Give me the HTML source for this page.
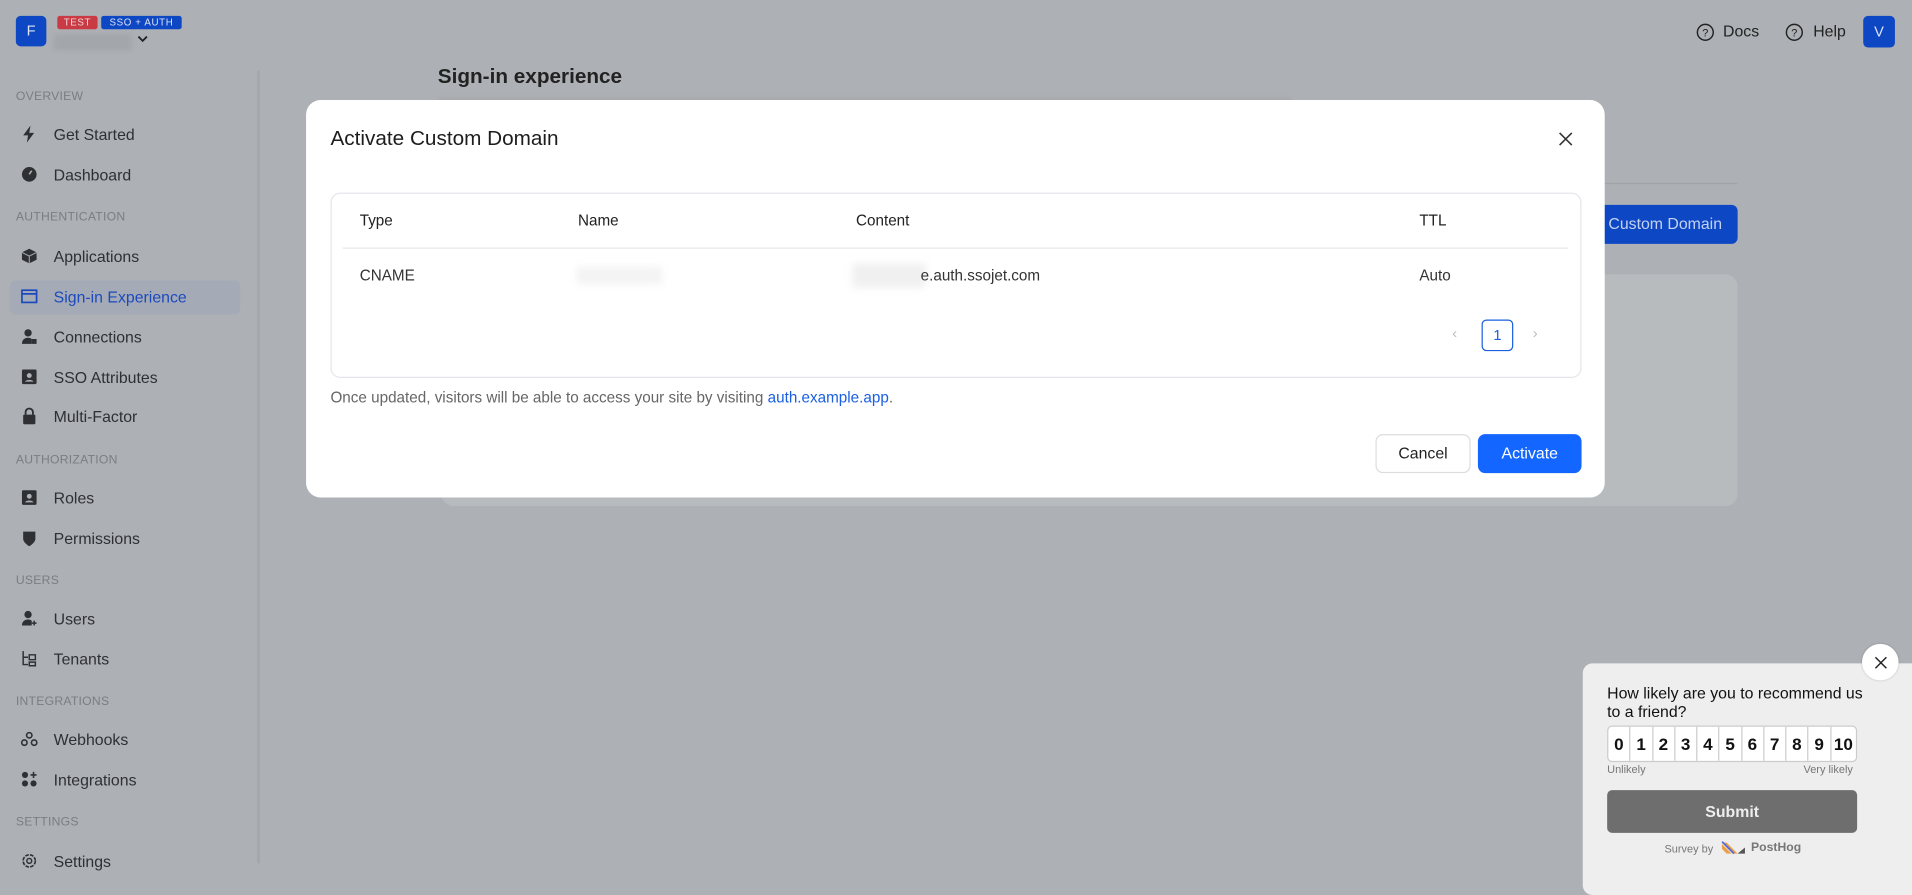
<!DOCTYPE html>
<html><head><meta charset="utf-8"><style>
html,body{margin:0;padding:0;width:1912px;height:876px;overflow:hidden;background:#adb0b4}
#w{position:absolute;left:0;top:0;width:1568px;height:718px;transform:scale(1.21939);transform-origin:0 0;font-family:"Liberation Sans",sans-serif;color:#2a2c30}
.a{position:absolute;white-space:nowrap}
.sec{font-size:10px;color:#7a7e84;letter-spacing:.2px}
.it{font-size:13px;color:#2e3033}
.ic{position:absolute;width:14px;height:14px;left:17px}
.modal{position:absolute;left:251px;top:82px;width:1065px;height:326px;background:#fff;border-radius:12px}
.th{font-size:12.5px;color:#222}
.nb{display:inline-block;width:17.7px;height:28px;border-left:1px solid #ccc;text-align:center;line-height:28px;font-weight:bold;font-size:14px;color:#111}
</style></head><body><div id="w">
<div class="a" style="left:13px;top:13px;width:25px;height:25px;background:#0e47c4;border-radius:4px;color:#dbe3f5;font-size:12px;text-align:center;line-height:25px">F</div>
<div class="a" style="left:47px;top:13px;width:33px;height:11px;background:#c93a45;border-radius:2px;color:#f3d6d9;font-size:8px;text-align:center;line-height:11px;letter-spacing:.5px">TEST</div>
<div class="a" style="left:83px;top:13px;width:66px;height:11px;background:#0e47c4;border-radius:2px;color:#dbe3f5;font-size:8px;text-align:center;line-height:11px;letter-spacing:.5px">SSO + AUTH</div>
<div class="a" style="left:44px;top:28px;width:64px;height:13px;background:#a3a6aa;filter:blur(2px)"></div>
<svg class="a" style="left:112px;top:28px" width="10" height="8" viewBox="0 0 10 8"><path d="M1.5 2l3.5 3.5 3.5-3.5" stroke="#222" stroke-width="1.5" fill="none"/></svg>
<svg class="a" style="left:1391px;top:19px" width="15" height="15" viewBox="0 0 15 15"><circle cx="7.5" cy="7.5" r="6.5" stroke="#222" stroke-width="1.2" fill="none"/><text x="7.5" y="11" font-size="9" text-anchor="middle" fill="#222" font-family="Liberation Sans">?</text></svg>
<div class="a" style="left:1413px;top:18px;font-size:13px;color:#222">Docs</div>
<svg class="a" style="left:1464px;top:19px" width="15" height="15" viewBox="0 0 15 15"><circle cx="7.5" cy="7.5" r="6.5" stroke="#222" stroke-width="1.2" fill="none"/><text x="7.5" y="11" font-size="9" text-anchor="middle" fill="#222" font-family="Liberation Sans">?</text></svg>
<div class="a" style="left:1487px;top:18px;font-size:13px;color:#222">Help</div>
<div class="a" style="left:1528px;top:13px;width:26px;height:26px;background:#0e47c4;border-radius:4px;color:#dbe3f5;font-size:12px;text-align:center;line-height:26px">V</div>
<div class="a" style="left:211px;top:58px;width:2px;height:650px;background:#a3a6aa"></div>
<div class="a" style="left:8px;top:230px;width:189px;height:28px;background:#a4abb7;border-radius:5px"></div>
<div class="a sec" style="left:13px;top:74px">OVERVIEW</div>
<div class="a sec" style="left:13px;top:173px">AUTHENTICATION</div>
<div class="a sec" style="left:13px;top:372px">AUTHORIZATION</div>
<div class="a sec" style="left:13px;top:471px">USERS</div>
<div class="a sec" style="left:13px;top:570px">INTEGRATIONS</div>
<div class="a sec" style="left:13px;top:669px">SETTINGS</div>
<div class="a it" style="left:44px;top:103px">Get Started</div>
<div class="a it" style="left:44px;top:136px">Dashboard</div>
<div class="a it" style="left:44px;top:203px">Applications</div>
<div class="a it" style="left:44px;top:236px;color:#1c49bd">Sign-in Experience</div>
<div class="a it" style="left:44px;top:269px">Connections</div>
<div class="a it" style="left:44px;top:302px">SSO Attributes</div>
<div class="a it" style="left:44px;top:334px">Multi-Factor</div>
<div class="a it" style="left:44px;top:401px">Roles</div>
<div class="a it" style="left:44px;top:434px">Permissions</div>
<div class="a it" style="left:44px;top:500px">Users</div>
<div class="a it" style="left:44px;top:533px">Tenants</div>
<div class="a it" style="left:44px;top:599px">Webhooks</div>
<div class="a it" style="left:44px;top:632px">Integrations</div>
<div class="a it" style="left:44px;top:699px">Settings</div>
<svg class="ic" style="top:103px" viewBox="0 0 14 14"><path d="M8 0L2 8h4l-1 6 6-8H7z" fill="#2e3033"/></svg>
<svg class="ic" style="top:136px" viewBox="0 0 14 14"><circle cx="7" cy="7" r="6" fill="#2e3033"/><path d="M7 7l2-3" stroke="#adb0b4" stroke-width="1.3"/></svg>
<svg class="ic" style="top:203px" viewBox="0 0 14 14"><path d="M7 1l6 3v6l-6 3-6-3V4z" fill="#2e3033"/><path d="M1 4l6 3 6-3M7 7v6" stroke="#adb0b4" stroke-width=".8" fill="none"/></svg>
<svg class="ic" style="top:236px" viewBox="0 0 14 14"><rect x="1" y="2" width="12" height="10" stroke="#1c49bd" stroke-width="1.4" fill="none"/><path d="M1 5h12" stroke="#1c49bd" stroke-width="1.4"/></svg>
<svg class="ic" style="top:269px" viewBox="0 0 14 14"><circle cx="6" cy="4" r="3" fill="#2e3033"/><path d="M1 13c0-4 3-5 5-5s3 1 3 1v4z" fill="#2e3033"/><rect x="9" y="9" width="4" height="4" fill="#2e3033"/></svg>
<svg class="ic" style="top:302px" viewBox="0 0 14 14"><rect x="1" y="1" width="12" height="12" rx="1" fill="#2e3033"/><circle cx="7" cy="6" r="2" fill="#adb0b4"/><path d="M3.5 11c1-2 6-2 7 0" fill="#adb0b4"/></svg>
<svg class="ic" style="top:334px" viewBox="0 0 14 14"><path d="M4 6V4a3 3 0 016 0v2" stroke="#2e3033" stroke-width="1.5" fill="none"/><rect x="2" y="6" width="10" height="8" rx="1" fill="#2e3033"/></svg>
<svg class="ic" style="top:401px" viewBox="0 0 14 14"><rect x="1" y="1" width="12" height="12" rx="1" fill="#2e3033"/><circle cx="7" cy="6" r="2" fill="#adb0b4"/><path d="M3.5 11c1-2 6-2 7 0" fill="#adb0b4"/></svg>
<svg class="ic" style="top:434px" viewBox="0 0 14 14"><path d="M2 2h10v6c0 3-5 6-5 6S2 11 2 8z" fill="#2e3033"/></svg>
<svg class="ic" style="top:500px" viewBox="0 0 14 14"><circle cx="6" cy="4" r="3" fill="#2e3033"/><path d="M1 13c0-4 3-5 5-5s3 1 3 1v4z" fill="#2e3033"/><path d="M11 9v4M9 11h4" stroke="#2e3033" stroke-width="1.2"/></svg>
<svg class="ic" style="top:533px" viewBox="0 0 14 14"><path d="M2 1v11h4M2 6h4M7 4h5v4H7zM7 10h5v3H7z" stroke="#2e3033" stroke-width="1.2" fill="none"/></svg>
<svg class="ic" style="top:599px" viewBox="0 0 14 14"><circle cx="7" cy="4" r="2.2" stroke="#2e3033" stroke-width="1.3" fill="none"/><circle cx="3" cy="10" r="2.2" stroke="#2e3033" stroke-width="1.3" fill="none"/><circle cx="11" cy="10" r="2.2" stroke="#2e3033" stroke-width="1.3" fill="none"/></svg>
<svg class="ic" style="top:632px" viewBox="0 0 14 14"><circle cx="3.5" cy="3.5" r="2.5" fill="#2e3033"/><circle cx="3.5" cy="10.5" r="2.5" fill="#2e3033"/><circle cx="10.5" cy="10.5" r="2.5" fill="#2e3033"/><path d="M10.5 1v5M8 3.5h5" stroke="#2e3033" stroke-width="1.3"/></svg>
<svg class="ic" style="top:699px" viewBox="0 0 14 14"><circle cx="7" cy="7" r="5" stroke="#2e3033" stroke-width="1.3" fill="none" stroke-dasharray="3 1"/><circle cx="7" cy="7" r="2" stroke="#2e3033" stroke-width="1.2" fill="none"/></svg>
<div class="a" style="left:359px;top:53px;font-size:17px;font-weight:bold;color:#222">Sign-in experience</div>
<div class="a" style="left:359px;top:80px;width:700px;height:5px;background:#a6a9ad;filter:blur(1px)"></div>
<div class="a" style="left:1300px;top:150px;width:125px;height:1px;background:#a0a3a8"></div>
<div class="a" style="left:1290px;top:168px;width:135px;height:32px;background:#0e47c4;border-radius:5px;color:#c4d2f0;font-size:13px;line-height:32px;text-indent:29px">Custom Domain</div>
<div class="a" style="left:362px;top:225px;width:1063px;height:190px;background:#b8bbbe;border-radius:10px"></div>
<div class="modal">
<div class="a" style="left:20px;top:22px;font-size:17px;color:#1d1d1f">Activate Custom Domain</div>
<svg class="a" style="left:1027px;top:26px" width="12" height="12" viewBox="0 0 12 12"><path d="M1 1l10 10M11 1L1 11" stroke="#333" stroke-width="1.3"/></svg>
<div class="a" style="left:20px;top:76px;width:1024px;height:150px;border:1px solid #e4e6ea;border-radius:8px"></div>
<div class="a th" style="left:44px;top:92px">Type</div>
<div class="a th" style="left:223px;top:92px">Name</div>
<div class="a th" style="left:451px;top:92px">Content</div>
<div class="a th" style="left:913px;top:92px">TTL</div>
<div class="a" style="left:30px;top:121px;width:1005px;height:1px;background:#e8e9ec"></div>
<div class="a th" style="left:44px;top:137px;color:#333">CNAME</div>
<div class="a" style="left:222px;top:137px;width:70px;height:14px;background:#f3f3f3;filter:blur(3px)"></div>
<div class="a" style="left:448px;top:134px;width:60px;height:20px;background:#f0f0f0;filter:blur(3px)"></div>
<div class="a th" style="left:504px;top:137px;color:#333">e.auth.ssojet.com</div>
<div class="a th" style="left:913px;top:137px;color:#333">Auto</div>
<div class="a" style="left:940px;top:184px;color:#bbb;font-size:12px">&lsaquo;</div>
<div class="a" style="left:964px;top:180px;width:24px;height:24px;border:1px solid #1a5fe0;border-radius:4px;color:#1a5fe0;font-size:12px;text-align:center;line-height:24px">1</div>
<div class="a" style="left:1006px;top:184px;color:#bbb;font-size:12px">&rsaquo;</div>
<div class="a" style="left:20px;top:237px;font-size:12.5px;color:#666">Once updated, visitors will be able to access your site by visiting <span style="color:#1a5fe0">auth.example.app</span>.</div>
<div class="a" style="left:877px;top:274px;width:76px;height:30px;border:1px solid #dcdde0;border-radius:6px;font-size:13px;text-align:center;line-height:30px;color:#222">Cancel</div>
<div class="a" style="left:961px;top:274px;width:85px;height:32px;background:#1366ff;border-radius:6px;font-size:13px;text-align:center;line-height:32px;color:#fff">Activate</div>
</div>
<div class="a" style="left:1298px;top:544px;width:290px;height:190px;background:#eeeeee;border-radius:8px"></div>
<div class="a" style="left:1527px;top:528px;width:30px;height:30px;background:#fff;border-radius:50%;box-shadow:0 0 2px rgba(0,0,0,.2)"></div>
<svg class="a" style="left:1537px;top:538px" width="11" height="11" viewBox="0 0 11 11"><path d="M1 1l9 9M10 1L1 10" stroke="#222" stroke-width="1.2"/></svg>
<div class="a" style="left:1318px;top:561px;font-size:13px;line-height:15px;color:#111;white-space:normal;width:210px">How likely are you to recommend us to a friend?</div>
<div class="a" style="left:1318px;top:595px;width:203px;height:28px;border:1px solid #ccc;border-radius:4px;background:#fff;overflow:hidden;display:flex"><span class="nb" style="border:0">0</span><span class="nb">1</span><span class="nb">2</span><span class="nb">3</span><span class="nb">4</span><span class="nb">5</span><span class="nb">6</span><span class="nb">7</span><span class="nb">8</span><span class="nb">9</span><span class="nb" style="width:21px">10</span></div>
<div class="a" style="left:1318px;top:626px;font-size:9px;color:#777">Unlikely</div>
<div class="a" style="left:1479px;top:626px;font-size:9px;color:#777">Very likely</div>
<div class="a" style="left:1318px;top:648px;width:205px;height:35px;background:#6e6e6e;border-radius:4px;color:#eee;font-weight:bold;font-size:13px;text-align:center;line-height:35px">Submit</div>
<div class="a" style="left:1365px;top:691px;font-size:9px;color:#777">Survey by</div>
<svg class="a" style="left:1412px;top:690px" width="20" height="11" viewBox="0 0 20 11"><path d="M0 2l8 8H4L0 6zM4 1l9 9H9L0 1z" fill="#e8a14a"/><path d="M0 0l10 10" stroke="#5a6bd6" stroke-width="1.5"/><path d="M13 10l6-5v5z" fill="#555"/></svg>
<div class="a" style="left:1436px;top:690px;font-size:10px;font-weight:bold;color:#777">PostHog</div>
</div></body></html>
